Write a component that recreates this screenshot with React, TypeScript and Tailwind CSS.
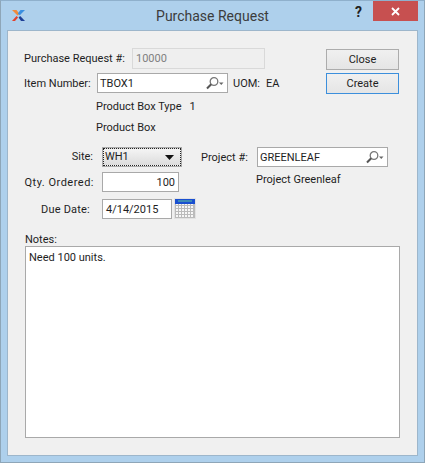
import React from "react";

const font = "font-['Roboto','Noto_Sans',sans-serif]";

function LookupIcon() {
  return (
    <svg width="18" height="14" viewBox="0 0 18 14" className="shrink-0">
      <circle cx="8" cy="5.5" r="3.8" fill="#fff" stroke="#777" strokeWidth="1.3" />
      <path d="M5.2 8.3 1 12.5" stroke="#555" strokeWidth="2" />
      <path d="M13 6.5h4.5l-2.25 2.5z" fill="#666" />
    </svg>
  );
}

function CalendarIcon() {
  const xs = [1, 4, 7, 10, 13, 16, 19, 20];
  const ys = [7, 10, 13, 16, 19];
  return (
    <svg width="22" height="21" viewBox="0 0 22 21" className="shrink-0">
      <rect x="0" y="0" width="22" height="21" fill="#e2e2e2" />
      <rect x="1" y="1" width="20" height="5" fill="#1a4fd0" />
      <rect x="4" y="2" width="14" height="2" fill="#3d8ab5" />
      <rect x="1" y="6" width="20" height="14" fill="#f7f7f7" />
      {xs.map((x) => (
        <rect key={x} x={x} y="6" width="1" height="14" fill="#bbb" />
      ))}
      {ys.map((y) => (
        <rect key={y} x="1" y={y} width="20" height="1" fill="#bbb" />
      ))}
    </svg>
  );
}

function Logo() {
  return (
    <svg width="13" height="11" viewBox="0 0 13 11">
      <path d="M0 0h4.5l3 4-2 1.6z" fill="#f08a3c" />
      <path d="M0 11 4.5 6l1.6 1.4L3 11z" fill="#e2412d" />
      <path d="M13 0H8.5L5.8 3.6l2 1.6z" fill="#3a8fe0" />
      <path d="M13 11H9L6.6 7.6l1.6-1.6z" fill="#1d3f96" />
    </svg>
  );
}

export default function App() {
  return (
    <div className={`${font} flex h-[463px] w-[425px] flex-col whitespace-nowrap border border-[#8ea6b8] border-t-[#8fb0cc] bg-[#aed0ec] text-[11px] leading-[16px] text-[#1e1e1e]`}>
      {/* title bar */}
      <div className="relative flex h-[29px] shrink-0 items-center justify-center">
        <div className="absolute left-[11px] top-[9px]">
          <Logo />
        </div>
        <span className="text-[14px] text-[#3c3c3c]">Purchase Request</span>
        <span className="absolute left-[354px] top-[3px] text-[14px] font-bold text-[#222]">?</span>
        <div className="absolute right-[6px] top-0 flex h-[20px] w-[45px] items-center justify-center bg-[#c75050]">
          <svg width="9" height="9" viewBox="0 0 9 9">
            <path d="M1 1l7 7M8 1 1 8" stroke="#fff" strokeWidth="1.8" />
          </svg>
        </div>
      </div>

      {/* panel */}
      <div className="mx-[6px] flex h-[426px] flex-col border border-[#9db6cb] bg-[#f0f0f0] pl-[16px] pr-[18px] pt-[17px]">
        <div className="flex justify-between">
          <div className="flex flex-col">
            <div className="flex h-[21px] items-center">
              <span className="w-[108px] shrink-0">Purchase Request #:</span>
              <div className="flex h-[21px] w-[133px] items-center border border-[#d9d9d9] bg-[#efefef] px-[3px] text-[#808080]">10000</div>
            </div>
            <div className="mt-[4px] flex h-[20px] items-center">
              <span className="w-[73px] shrink-0 pt-px">Item Number:</span>
              <div className="flex h-[20px] w-[131px] items-center justify-between border border-[#a9a9a9] bg-white pl-[2px] pr-[3px]">
                <span className="pt-px">TBOX1</span>
                <LookupIcon />
              </div>
              <span className="ml-[5px] w-[33px] shrink-0 pt-px">UOM:</span>
              <span className="pt-px">EA</span>
            </div>
            <div className="ml-[72px] mt-[6px] flex h-[16px] gap-[8px]">
              <span>Product Box Type</span>
              <span>1</span>
            </div>
            <div className="ml-[72px] mt-[5px] h-[16px]">Product Box</div>
          </div>
          <div className="flex flex-col gap-[3px] pt-px">
            <button className="h-[21px] w-[73px] border border-[#acacac] bg-gradient-to-b from-[#f0f0f0] to-[#e5e5e5]">Close</button>
            <button className="h-[21px] w-[73px] border border-[#3c8fdc] bg-gradient-to-b from-[#f0f0f0] to-[#e5e5e5]">Create</button>
          </div>
        </div>

        <div className="mt-[11px] flex">
          <div className="flex flex-col">
            <div className="flex h-[20px] items-center">
              <span className="w-[70px] shrink-0 pr-[1px] text-right">Site:</span>
              <span className="w-[8px] shrink-0" />
              <div className="h-[20px] w-[80px] border border-[#a9a9a9]">
                <div className="flex h-full items-center justify-between border border-dotted border-[#222] bg-gradient-to-b from-[#f4f4f4] to-[#dcdcdc] pl-[1px] pr-[6px]">
                  <span>WH1</span>
                  <svg width="9" height="5" viewBox="0 0 9 5">
                    <path d="M0 0h9L4.5 5z" fill="#111" />
                  </svg>
                </div>
              </div>
            </div>
            <div className="mt-[5px] flex h-[20px] items-center">
              <span className="w-[70px] shrink-0 pt-px text-right tracking-[0.5px]">Qty. Ordered:</span>
              <span className="w-[8px] shrink-0" />
              <div className="flex h-[20px] w-[77px] items-center justify-end border border-[#a9a9a9] bg-white pr-[3px] pt-px">100</div>
            </div>
            <div className="mt-[7px] flex h-[20px] items-center">
              <span className="w-[67px] shrink-0 pr-px pt-px text-right tracking-[0.2px]">Due Date:</span>
              <span className="w-[11px] shrink-0" />
              <div className="flex h-[20px] w-[70px] items-center border border-[#a9a9a9] bg-white pl-[3px] pt-px">4/14/2015</div>
              <div className="ml-[2px] -mt-[1px]">
                <CalendarIcon />
              </div>
            </div>
          </div>
          <div className="ml-[5px] flex flex-col">
            <div className="flex h-[20px] items-center">
              <span className="w-[56px] shrink-0 pt-px">Project #:</span>
              <div className="flex h-[20px] w-[131px] items-center justify-between border border-[#a9a9a9] bg-white pl-[2px] pr-[3px]">
                <span className="pt-px">GREENLEAF</span>
                <LookupIcon />
              </div>
            </div>
            <div className="ml-[55px] mt-[5px]">Project Greenleaf</div>
          </div>
        </div>

        <div className="ml-px mt-[14px] h-[13px] leading-[13px]">Notes:</div>
        <div className="ml-px h-[192px] w-[375px] border border-[#a9a9a9] bg-white px-[3px] pt-[3px]">Need 100 units.</div>
      </div>
    </div>
  );
}
